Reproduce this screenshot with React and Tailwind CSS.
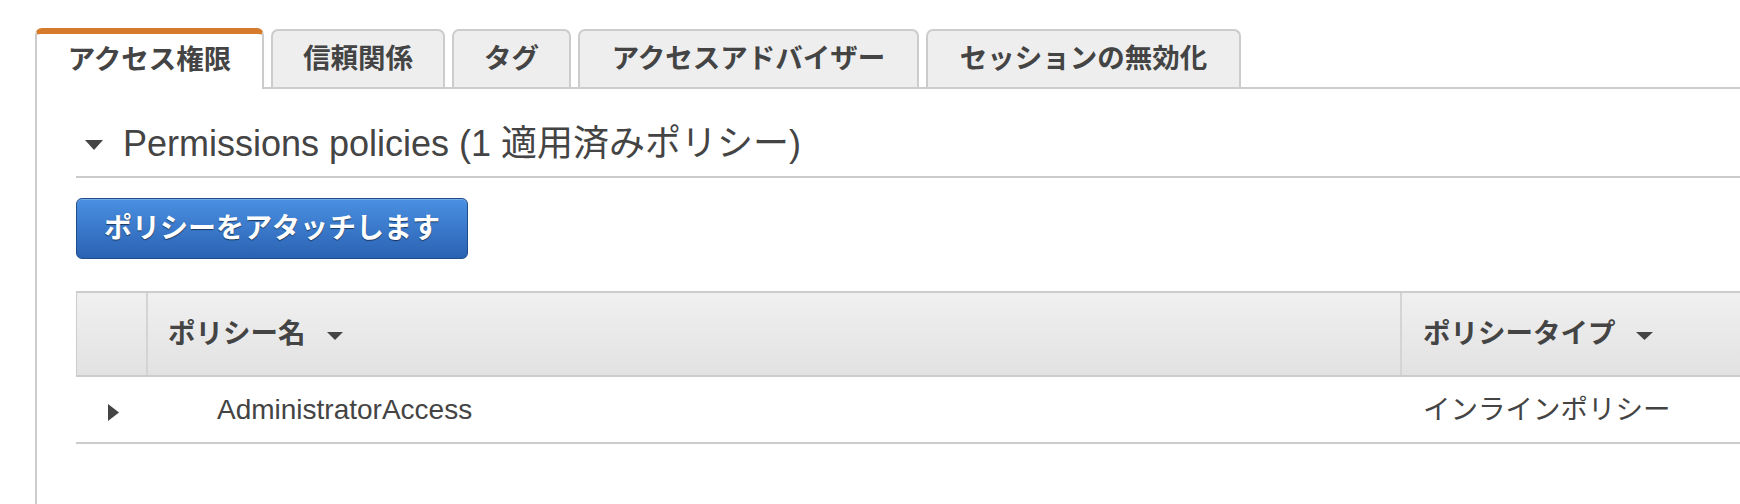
import React from "react";

const tabs = [
  { label: "アクセス権限", w: "w-[229px]", active: true },
  { label: "信頼関係", w: "w-[174px]" },
  { label: "タグ", w: "w-[119px]" },
  { label: "アクセスアドバイザー", w: "w-[341px]" },
  { label: "セッションの無効化", w: "w-[315px]" },
];

function DownTri({ className }) {
  return (
    <svg className={className} viewBox="0 0 18 10" preserveAspectRatio="none">
      <polygon points="0,0 18,0 9,10" fill="#444" />
    </svg>
  );
}

export default function App() {
  return (
    <div className="w-[1740px] h-[504px] bg-white overflow-hidden pt-[28px] pl-[35px] font-['Liberation_Sans','Noto_Sans_CJK_JP',sans-serif] text-[#444]">
      {/* tabs */}
      <div className="flex items-end gap-[7px] border-b-2 border-[#cccccc]">
        {tabs.map((t) =>
          t.active ? (
            <div
              key={t.label}
              className={`${t.w} h-[61px] -mb-[2px] bg-white border-x-2 border-t-[6px] border-x-[#cccccc] border-t-[#d67b2c] rounded-t-[7px] flex items-center justify-center pb-[4px] font-bold text-[27.5px] leading-none text-[#444]`}
            >
              {t.label}
            </div>
          ) : (
            <div
              key={t.label}
              className={`${t.w} h-[58px] bg-[#eeeeee] border-x-2 border-t-2 border-[#cccccc] rounded-t-[7px] flex items-center justify-center font-bold text-[27.5px] leading-none text-[#444]`}
            >
              {t.label}
            </div>
          )
        )}
      </div>

      {/* content */}
      <div className="border-l-2 border-[#cccccc] pl-[39px] pt-[23px] h-[415px]">
        <div className="flex items-center h-[66px] border-b-2 border-[#cccccc]">
          <DownTri className="ml-[9px] w-[18px] h-[10px] mt-[2px]" />
          <span className="ml-[20px] text-[36px] leading-none text-[#444]">
            Permissions policies (1 適用済みポリシー)
          </span>
        </div>

        <button className="mt-[20px] w-[392px] h-[61px] rounded-[6px] border border-[#1f4c8a] bg-linear-to-b from-[#4a90e2] to-[#2b62b3] text-white font-bold text-[28px] leading-none flex items-center justify-center [text-shadow:0_1px_1px_rgba(0,0,0,0.55)] shadow-[inset_0_1px_0_rgba(255,255,255,0.25)]">
          ポリシーをアタッチします
        </button>

        {/* table */}
        <div className="mt-[32px]">
          <div className="flex h-[86px] border-y-2 border-l border-[#cccccc] bg-linear-to-b from-[#f0f0f0] to-[#e2e2e2]">
            <div className="w-[71px] border-r-2 border-[#d4d4d4]" />
            <div className="w-[1254px] border-r-2 border-[#d4d4d4] flex items-center pl-[20px] font-bold text-[27.5px] leading-none">
              <span>ポリシー名</span>
              <DownTri className="ml-[21px] w-[16px] h-[8px] mt-[4px]" />
            </div>
            <div className="flex-1 flex items-center pl-[21px] font-bold text-[27.5px] leading-none">
              <span>ポリシータイプ</span>
              <DownTri className="ml-[20px] w-[17px] h-[8px] mt-[4px]" />
            </div>
          </div>
          <div className="flex h-[67px] border-b-2 border-[#cccccc]">
            <div className="w-[72px] flex items-center justify-center pt-[5px]">
              <svg className="w-[11px] h-[17px] ml-[2px]" viewBox="0 0 11 17">
                <polygon points="0,0 11,8.5 0,17" fill="#444" />
              </svg>
            </div>
            <div className="w-[1254px] flex items-center pl-[69px] text-[28px] leading-none">
              AdministratorAccess
            </div>
            <div className="flex-1 flex items-center pl-[21px] text-[27.5px] leading-none">
              インラインポリシー
            </div>
          </div>
        </div>
      </div>
    </div>
  );
}
